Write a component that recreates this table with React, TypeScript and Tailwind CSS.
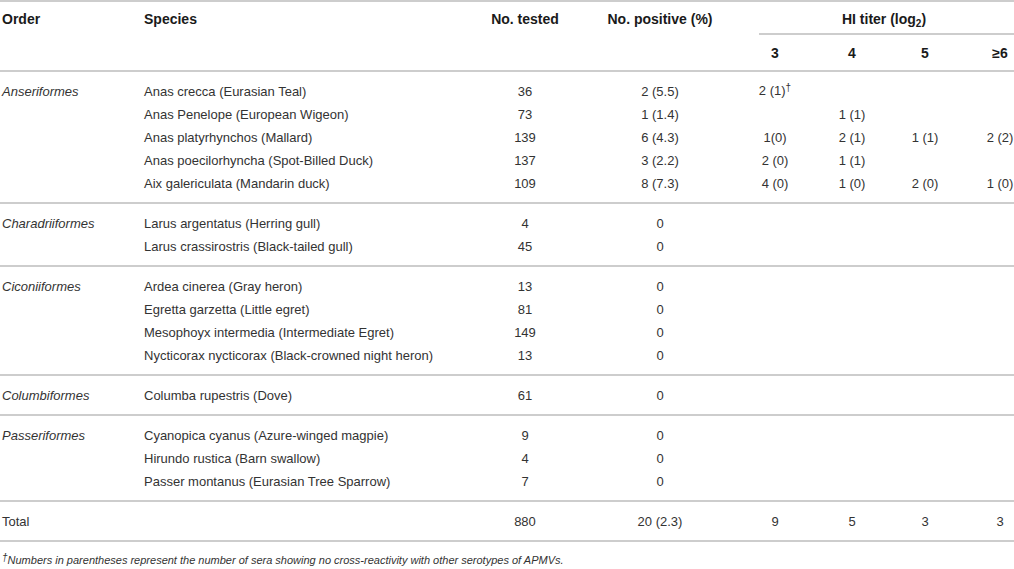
import React from "react";

type Row = {
  species: string;
  tested: string;
  positive: string;
  hi: [string, string, string, string];
  dagger?: boolean;
};

type Group = { order: string; rows: Row[] };

const groups: Group[] = [
  {
    order: "Anseriformes",
    rows: [
      { species: "Anas crecca (Eurasian Teal)", tested: "36", positive: "2 (5.5)", hi: ["2 (1)", "", "", ""], dagger: true },
      { species: "Anas Penelope (European Wigeon)", tested: "73", positive: "1 (1.4)", hi: ["", "1 (1)", "", ""] },
      { species: "Anas platyrhynchos (Mallard)", tested: "139", positive: "6 (4.3)", hi: ["1(0)", "2 (1)", "1 (1)", "2 (2)"] },
      { species: "Anas poecilorhyncha (Spot-Billed Duck)", tested: "137", positive: "3 (2.2)", hi: ["2 (0)", "1 (1)", "", ""] },
      { species: "Aix galericulata (Mandarin duck)", tested: "109", positive: "8 (7.3)", hi: ["4 (0)", "1 (0)", "2 (0)", "1 (0)"] },
    ],
  },
  {
    order: "Charadriiformes",
    rows: [
      { species: "Larus argentatus (Herring gull)", tested: "4", positive: "0", hi: ["", "", "", ""] },
      { species: "Larus crassirostris (Black-tailed gull)", tested: "45", positive: "0", hi: ["", "", "", ""] },
    ],
  },
  {
    order: "Ciconiiformes",
    rows: [
      { species: "Ardea cinerea (Gray heron)", tested: "13", positive: "0", hi: ["", "", "", ""] },
      { species: "Egretta garzetta (Little egret)", tested: "81", positive: "0", hi: ["", "", "", ""] },
      { species: "Mesophoyx intermedia (Intermediate Egret)", tested: "149", positive: "0", hi: ["", "", "", ""] },
      { species: "Nycticorax nycticorax (Black-crowned night heron)", tested: "13", positive: "0", hi: ["", "", "", ""] },
    ],
  },
  {
    order: "Columbiformes",
    rows: [{ species: "Columba rupestris (Dove)", tested: "61", positive: "0", hi: ["", "", "", ""] }],
  },
  {
    order: "Passeriformes",
    rows: [
      { species: "Cyanopica cyanus (Azure-winged magpie)", tested: "9", positive: "0", hi: ["", "", "", ""] },
      { species: "Hirundo rustica (Barn swallow)", tested: "4", positive: "0", hi: ["", "", "", ""] },
      { species: "Passer montanus (Eurasian Tree Sparrow)", tested: "7", positive: "0", hi: ["", "", "", ""] },
    ],
  },
];

const cols = "grid grid-cols-[144px_316px_130px_140px_90px_64px_82px_48px]";

function Line() {
  return <div className="h-[2px] bg-[#cdcdcd]" />;
}

function DataRow({ order, italic, row }: { order: string; italic: boolean; row: Row }) {
  return (
    <div className={`${cols} h-[23px] items-center`}>
      <div className={`pl-[2px] ${italic ? "italic" : ""}`}>{order}</div>
      <div>{row.species}</div>
      <div className="text-center">{row.tested}</div>
      <div className="text-center">{row.positive}</div>
      <div className="text-center">
        {row.hi[0]}
        {row.dagger && <span className="relative -top-[4px] text-[10px]">†</span>}
      </div>
      <div className="text-center">{row.hi[1]}</div>
      <div className="text-center">{row.hi[2]}</div>
      <div className="text-center pl-[20px]">{row.hi[3]}</div>
    </div>
  );
}

export default function App() {
  return (
    <div className="w-[1014px] h-[569px] overflow-hidden bg-white font-['Liberation_Sans',Arial,sans-serif] text-[13px] leading-[16px] text-[#333]">
      <Line />
      <div className={`${cols} grid-rows-[31px_2px_35px] font-bold text-[14px] text-[#1a1a1a]`}>
        <div className="row-span-3 pl-[2px] pt-[9px]">Order</div>
        <div className="row-span-3 pt-[9px]">Species</div>
        <div className="row-span-3 pt-[9px] text-center">No. tested</div>
        <div className="row-span-3 pt-[9px] text-center">No. positive (%)</div>
        <div className="col-span-4 pt-[9px] pl-[24px] text-center">
          HI titer (log<sub className="text-[10px]">2</sub>)
        </div>
        <div className="col-span-4 ml-[29px] bg-[#cdcdcd]" />
        <div className="pt-[10px] text-center">3</div>
        <div className="pt-[10px] text-center">4</div>
        <div className="pt-[10px] text-center">5</div>
        <div className="pt-[10px] text-center pl-[20px]">≥6</div>
      </div>
      <Line />
      {groups.map((g) => (
        <div key={g.order}>
          <div className="pt-[8px] pb-[7px]">
            {g.rows.map((r, i) => (
              <DataRow key={r.species} order={i === 0 ? g.order : ""} italic row={r} />
            ))}
          </div>
          <Line />
        </div>
      ))}
      <div className="pt-[8px] pb-[7px]">
        <DataRow
          order="Total"
          italic={false}
          row={{ species: "", tested: "880", positive: "20 (2.3)", hi: ["9", "5", "3", "3"] }}
        />
      </div>
      <Line />
      <div className="mt-[10px] pl-[2px] italic text-[11px] leading-[16px]">
        <span className="relative -top-[3px] text-[10px]">†</span>Numbers in parentheses represent the number of sera showing no cross-reactivity with other serotypes of APMVs.
      </div>
    </div>
  );
}
